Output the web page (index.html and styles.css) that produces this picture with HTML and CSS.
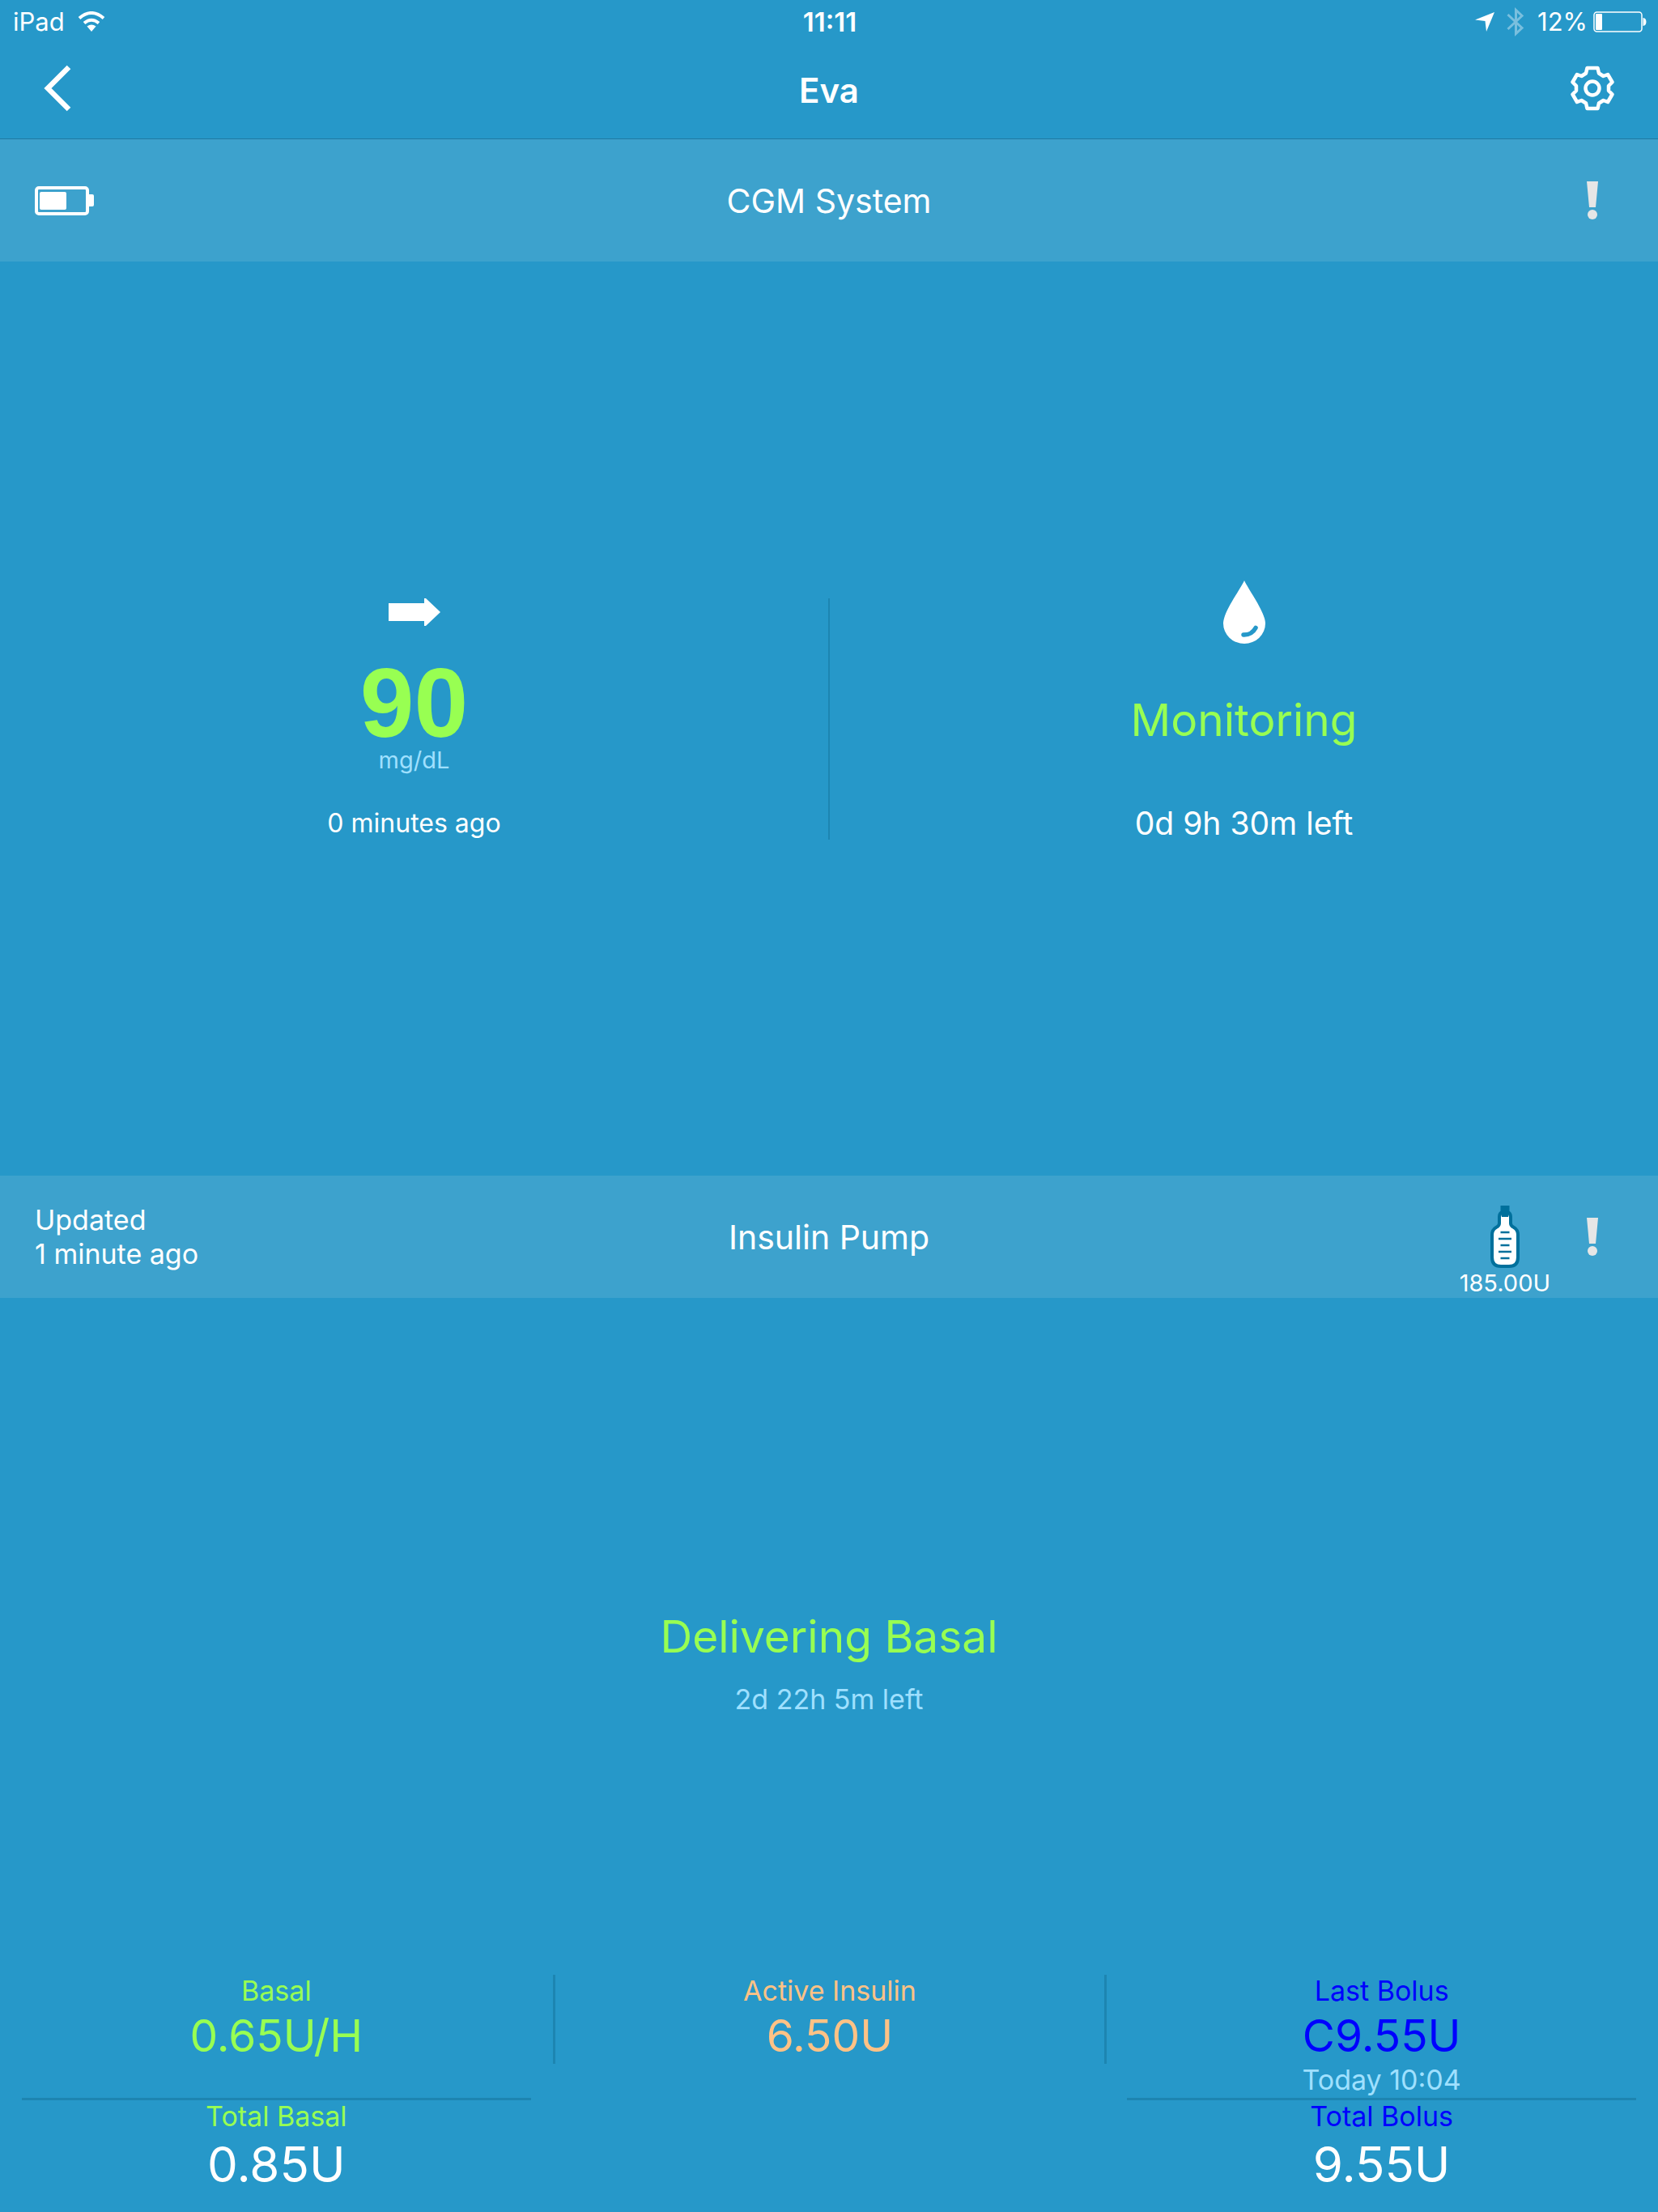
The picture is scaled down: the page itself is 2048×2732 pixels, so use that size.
FILE: index.html
```html
<!DOCTYPE html>
<html lang="en">
  <head>
    <meta charset="UTF-8" />
    <meta name="viewport" content="width=device-width, initial-scale=1.0" />
    <title>Eva</title>
    <link rel="stylesheet" href="styles.css">
  </head>
  <body>
    <header class="header">
      <div class="status-bar">
        <div class="status-left">
          <span>iPad</span>
          <svg class="wifi" width="34" height="26" viewBox="0 0 34 26">
            <path d="M2 8.500Q17 -4.500 32 8.500M8 14.500Q17 7 26 14.500" fill="none" stroke="#fff" stroke-width="4" />
            <path d="M11.500 18.500Q17 14.500 22.500 18.500L17 25Z" fill="#fff" />
          </svg>
        </div>
        <span class="clock">11:11</span>
        <div class="status-right">
          <svg class="location" width="26" height="26" viewBox="0 0 26 26">
            <path d="M25 1L15 25L13.500 12L1 10.500Z" fill="#fff" />
          </svg>
          <svg class="bluetooth" width="22" height="36" viewBox="0 0 22 36">
            <path d="M1.500 9L19 25.500L11.500 32.500V3.500L19 10.500L1.500 27" fill="none" stroke="#79bfde" stroke-width="3" />
          </svg>
          <span>12%</span>
          <svg class="charge" width="66" height="26" viewBox="0 0 66 26">
            <rect x="1" y="1" width="59" height="24" rx="3.500" fill="none" stroke="#fff" stroke-width="1.500" />
            <rect x="3" y="3" width="8" height="20" rx="1" fill="#fff" />
            <path d="M61.500 8Q65.500 8.500 65.500 13T61.500 18Z" fill="#fff" />
          </svg>
        </div>
      </div>
      <nav class="nav">
        <button class="icon-button back" aria-label="Back">
          <svg width="34" height="58" viewBox="0 0 34 58">
            <path d="M31 3L5 29L31 55" fill="none" stroke="#fff" stroke-width="6.500" />
          </svg>
        </button>
        <h1>Eva</h1>
        <button class="icon-button settings" aria-label="Settings">
          <svg width="54" height="56" viewBox="0 0 54 56" fill="none" stroke="#fff" stroke-width="4.500" stroke-linejoin="round">
            <path d="M20.500 3H33.500L35 9.500L40.500 13L46 11L51.500 20.500L47 25V31L51.500 35.500L46 45L40.500 43L35 46.500L33.500 53H20.500L19 46.500L13.500 43L8 45L2.500 35.500L7 31V25L2.500 20.500L8 11L13.500 13L19 9.500Z" />
            <circle cx="27" cy="28" r="8.500" />
          </svg>
        </button>
      </nav>
    </header>

    <main class="main">
      <section class="device">
        <div class="band">
          <div class="band-left">
            <svg width="74" height="38" viewBox="0 0 74 38">
              <rect x="2" y="3" width="63" height="32" rx="3" fill="none" stroke="#fff" stroke-width="4" />
              <rect x="6" y="8" width="33" height="22" rx="2" fill="#fff" />
              <rect x="65" y="11" width="8" height="15" rx="2" fill="#fff" />
            </svg>
          </div>
          <h2>CGM System</h2>
          <div class="band-right">
            <svg class="alert" width="16" height="48" viewBox="0 0 16 48" fill="#e6e6e6">
              <path d="M1 0H15L12 32H4Z" />
              <circle cx="8" cy="41" r="6" />
            </svg>
          </div>
        </div>
        <div class="sensor">
          <div class="sensor-half glucose">
            <svg width="64" height="34" viewBox="0 0 64 34">
              <path d="M0 6H44V0H46L64 17L46 34H44V28H0Z" fill="#fff" />
            </svg>
            <span class="glucose-value">90</span>
            <span class="glucose-unit">mg/dL</span>
            <span class="glucose-age">0 minutes ago</span>
          </div>
          <div class="divider"></div>
          <div class="sensor-half">
            <svg width="52" height="78" viewBox="0 0 52 78">
              <path d="M26 0C31 11 52 39 52 53A26 25 0 0 1 0 53C0 39 21 11 26 0Z" fill="#fff" />
              <path d="M25 67Q35 67.500 40 58.500" fill="none" stroke="#2698c9" stroke-width="5.500" stroke-linecap="round" />
            </svg>
            <span class="state sensor-state">Monitoring</span>
            <span class="sensor-left">0d 9h 30m left</span>
          </div>
        </div>
      </section>

      <section class="device">
        <div class="band">
          <p class="band-left updated">Updated<br />1 minute ago</p>
          <h2>Insulin Pump</h2>
          <div class="band-right">
            <div class="reservoir">
              <svg width="36" height="78" viewBox="0 0 36 78">
                <path d="M11 14V22Q11 25 7 27Q2 30 2 36V64Q2 75 13 75H23Q34 75 34 64V36Q34 30 29 27Q25 25 25 22V14Q25 9 21 8H15Q11 9 11 14Z" fill="#fff" stroke="#00709c" stroke-width="4" />
                <path d="M12.500 0H23.500V9L22 14H14L12.500 9Z" fill="#00709c" />
                <path d="M12.500 33H23.500M10 41H26M12.500 49H23.500M10 57H26M12.500 65H23.500" stroke="#00709c" stroke-width="2.500" />
              </svg>
              <span>185.00U</span>
            </div>
            <svg class="alert" width="16" height="48" viewBox="0 0 16 48" fill="#e6e6e6">
              <path d="M1 0H15L12 32H4Z" />
              <circle cx="8" cy="41" r="6" />
            </svg>
          </div>
        </div>
        <div class="delivery">
          <span class="state">Delivering Basal</span>
          <span class="delivery-left">2d 22h 5m left</span>
        </div>
        <div class="stats">
          <div class="stat basal">
            <span class="label">Basal</span>
            <span class="value">0.65U/H</span>
          </div>
          <div class="stat active">
            <span class="label">Active Insulin</span>
            <span class="value">6.50U</span>
          </div>
          <div class="stat bolus">
            <span class="label">Last Bolus</span>
            <span class="value">C9.55U</span>
            <span class="time">Today 10:04</span>
          </div>
          <div class="stat total basal">
            <span class="label">Total Basal</span>
            <span class="value">0.85U</span>
          </div>
          <div class="stat total bolus">
            <span class="label">Total Bolus</span>
            <span class="value">9.55U</span>
          </div>
        </div>
      </section>
    </main>
  </body>
</html>
```
FILE: styles.css
```css
* {
  box-sizing: border-box;
}

body {
  margin: 0;
  min-height: 100vh;
  display: flex;
  flex-direction: column;
  background-color: #2698c9;
  color: #fff;
  font-family: Inter, "Liberation Sans", sans-serif;
}

h1,
h2,
p {
  margin: 0;
}

svg {
  display: block;
  flex: none;
}

/* header */

.header {
  border-bottom: 1px solid #2079a1;
}

.status-bar {
  display: grid;
  grid-template-columns: 1fr auto 1fr;
  align-items: center;
  height: 54px;
  padding: 0 14px 0 16px;
  font-size: 31px;
  line-height: 40px;
}

.status-left,
.status-right {
  display: flex;
  align-items: center;
}

.status-left {
  gap: 16px;
}

.status-right {
  justify-content: flex-end;
}

.clock {
  font-size: 33px;
  font-weight: 600;
}

.location {
  margin-right: 14px;
}

.bluetooth {
  margin-right: 16px;
}

.charge {
  margin-left: 7px;
}

.nav {
  display: grid;
  grid-template-columns: 1fr auto 1fr;
  align-items: center;
  height: 117px;
  padding: 0 54px;
}

.nav h1 {
  padding-bottom: 2px;
  font-size: 42px;
  font-weight: 600;
  line-height: 56px;
}

.icon-button {
  padding: 0 0 8px;
  border: none;
  background: none;
  cursor: pointer;
}

.back {
  justify-self: start;
}

.settings {
  justify-self: end;
}

/* devices, both take the same height */

.main {
  flex: 1;
  display: grid;
  grid-auto-rows: 1fr;
}

.device {
  display: flex;
  flex-direction: column;
}

.band {
  display: grid;
  grid-template-columns: 1fr auto 1fr;
  align-items: center;
  height: 151px;
  padding: 0 43px;
  background-color: #3da2cd;
}

.band h2 {
  font-size: 41px;
  font-weight: 400;
  line-height: 48px;
}

.band-right {
  display: flex;
  justify-content: flex-end;
  align-items: center;
  gap: 44px;
}

.alert {
  margin-right: 30px;
}

.updated {
  font-size: 34px;
  line-height: 42px;
}

.reservoir {
  display: flex;
  flex-direction: column;
  align-items: center;
  padding-top: 36px;
  font-size: 29px;
  line-height: 36px;
}

.state {
  font-size: 55px;
  line-height: 72px;
  color: #98ff52;
}

/* sensor */

.sensor {
  flex: 1;
  display: flex;
  justify-content: center;
  align-items: center;
}

.sensor-half {
  flex: 1;
  display: flex;
  flex-direction: column;
  align-items: center;
}

.sensor-half:last-child {
  padding-bottom: 22px;
}

.divider {
  width: 2px;
  height: 298px;
  background-color: #1d85b1;
}

.glucose-value {
  margin-top: 44px;
  font-family: "Liberation Sans Narrow", "Liberation Sans", sans-serif;
  font-size: 120px;
  font-weight: 700;
  line-height: 102px;
  color: #98ff52;
}

.glucose-unit {
  font-size: 29px;
  line-height: 40px;
  color: #9fe0ff;
}

.glucose-age {
  margin-top: 38px;
  font-size: 32px;
  line-height: 40px;
}

.sensor-state {
  margin-top: 58px;
}

.sensor-left {
  margin-top: 72px;
  font-size: 39px;
  line-height: 40px;
}

/* pump */

.delivery {
  flex: 1;
  display: flex;
  flex-direction: column;
  justify-content: center;
  align-items: center;
  gap: 22px;
  padding-top: 62px;
}

.delivery-left {
  font-size: 34px;
  line-height: 40px;
  color: #9fe0ff;
}

.stats {
  display: grid;
  grid-template-columns: repeat(3, 1fr);
  row-gap: 2px;
  align-items: start;
  padding-bottom: 20px;
}

.stat {
  display: flex;
  flex-direction: column;
  align-items: center;
}

.label,
.time {
  font-size: 34px;
  line-height: 40px;
}

.value {
  font-size: 55px;
  line-height: 70px;
}

.time {
  color: #9fe0ff;
}

.basal {
  color: #98ff52;
}

.active {
  margin-right: -2px;
  border-left: 3px solid #1d85b1;
  border-right: 3px solid #1d85b1;
  color: #ffc285;
}

.bolus {
  color: #0000ff;
}

.total {
  margin: 0 27px;
  border-top: 3px solid #1d85b1;
}

.total.bolus {
  grid-column: 3;
}

.total .value {
  font-size: 60px;
  line-height: 78px;
  color: #fff;
}
```
